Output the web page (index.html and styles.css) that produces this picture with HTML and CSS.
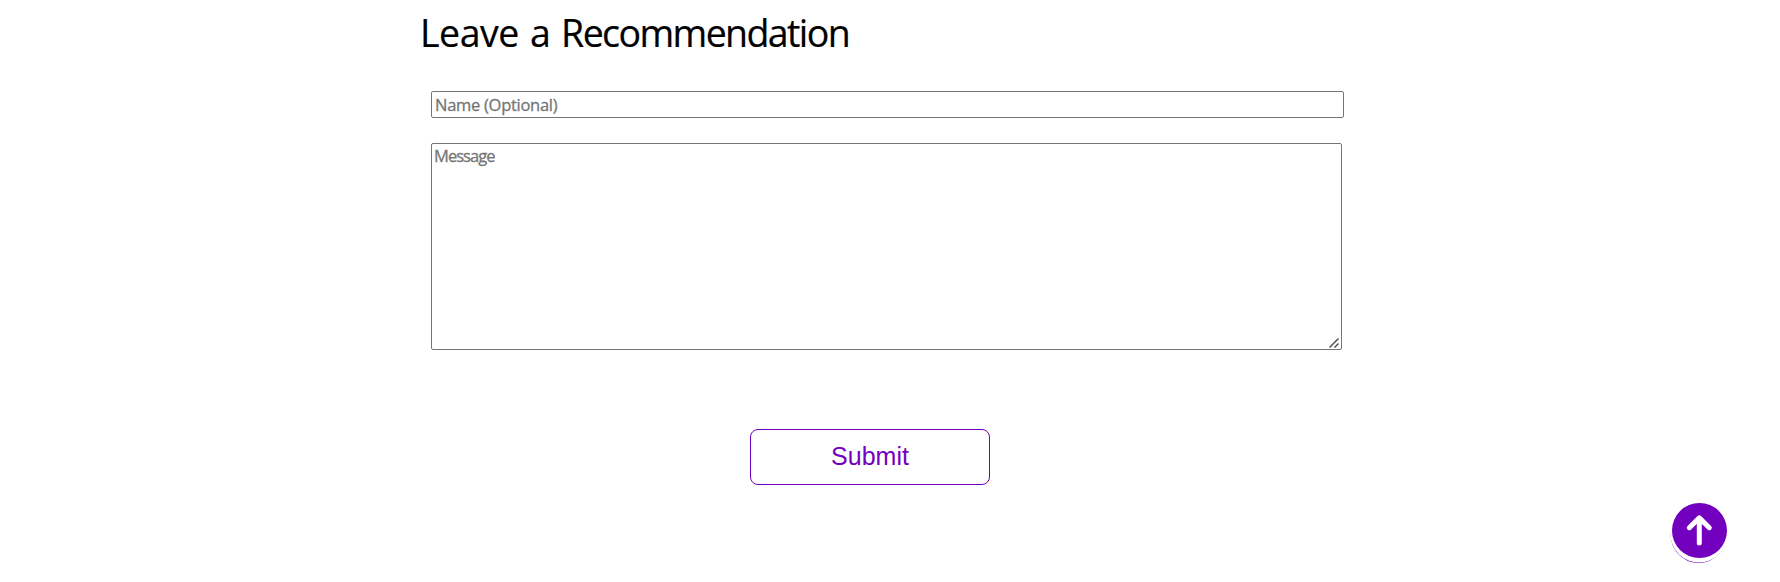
FILE: index.html
```html
<!DOCTYPE html>
<html lang="en">
<head>
<meta charset="utf-8">
<title>Leave a Recommendation</title>
<link rel="stylesheet" href="styles.css">
</head>
<body>
<main class="recommend">
  <h1 class="heading"><span class="lead">Leave a</span> <span class="tight">Recommendation</span></h1>
  <form class="form">
    <input class="field name" type="text" placeholder="Name (Optional)">
    <div class="message-box">
      <textarea class="field message" placeholder="Message"></textarea>
      <svg class="grip" viewBox="0 0 10 10" fill="none" stroke="#505050" stroke-width="1.5">
        <path d="M0.5 9.5L9.5 0.5M5.5 9.5L9.5 5.5"/>
      </svg>
    </div>
    <button class="submit" type="button">Submit</button>
  </form>
</main>
<a class="to-top" href="#" aria-label="Back to top">
  <svg class="arrow" viewBox="0 0 55 55" fill="none" stroke="#fff" stroke-width="5" stroke-linecap="round" stroke-linejoin="round">
    <path d="M27.3 40V15.5M17.3 24.7L27.3 14.9L37.3 24.7"/>
  </svg>
</a>
</body>
</html>
```
FILE: styles.css
```css
body {
  margin: 0;
  height: 582px;
  overflow: hidden;
  background: #fff;
  font-family: "Trebuchet MS", "Open Sans", sans-serif;
}
.recommend {
  width: 938px;
  margin-left: 420px;
  padding-top: 6px;
}
.heading {
  margin: 0;
  height: 54px;
  line-height: 53px;
  font-size: 37.5px;
  font-weight: 400;
  white-space: nowrap;
  -webkit-text-stroke: 0.2px #000;
}
.lead {
  letter-spacing: -0.5px;
  word-spacing: 2px;
}
.tight {
  margin-left: 1px;
  letter-spacing: -1.6px;
}
.form {
  display: flex;
  flex-direction: column;
  align-items: flex-start;
  padding: 31px 0 0 11px;
}
.field {
  box-sizing: border-box;
  margin: 0;
  border: 1px solid #767676;
  border-radius: 2px;
  background: #fff;
  font-family: inherit;
  font-size: 16.5px;
}
.field::placeholder {
  color: #757575;
  -webkit-text-stroke: 0.3px #757575;
}
.name {
  width: 913px;
  height: 27px;
  padding: 1px 3px;
  letter-spacing: -0.28px;
}
.message-box {
  position: relative;
  margin-top: 25px;
}
.message {
  display: block;
  width: 911px;
  height: 207px;
  padding: 2px;
  line-height: 20px;
  letter-spacing: -0.95px;
  resize: none;
}
.grip {
  position: absolute;
  right: 3px;
  bottom: 2px;
  width: 10px;
  height: 10px;
}
.submit {
  width: 240px;
  height: 56px;
  margin: 79px 0 0 319px;
  padding: 0 0 2px;
  border: 1px solid #7300bf;
  border-radius: 8px;
  background: #fff;
  color: #7300bf;
  font: 25px "Liberation Sans", Arial, sans-serif;
}
.to-top {
  position: fixed;
  left: 1672px;
  top: 503px;
  width: 55px;
  height: 55px;
  border-radius: 50%;
  background: #7300bf;
  box-shadow: -0.5px 3.5px 0 1px #fff, -0.9px 4.6px 0 0.4px #7300bf;
}
.arrow {
  display: block;
  width: 55px;
  height: 55px;
}
```
